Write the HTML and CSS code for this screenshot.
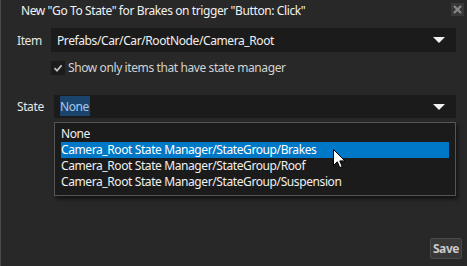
FILE: index.html
```html
<!DOCTYPE html>
<html lang="en">
<head>
    <meta charset="UTF-8">
    <meta name="viewport" content="width=device-width, initial-scale=1.0">
    <title>Go To State</title>
    <link rel="stylesheet" href="styles.css">
</head>
<body>
    <div class="dialog">
        <div class="titlebar">
            <span class="title">New "Go To State" for Brakes on trigger "Button: Click"</span>
            <span class="close">
                <svg width="9" height="9" viewBox="0 0 9 9"><path d="M1 1L8 8M8 1L1 8" stroke="#8a8a8a" stroke-width="2"/></svg>
            </span>
        </div>

        <div class="form-row item-row">
            <label class="label">Item</label>
            <div class="combo">
                <span class="combo-text">Prefabs/Car/Car/RootNode/Camera_Root</span>
                <span class="arrow"></span>
            </div>
        </div>

        <div class="check-row">
            <span class="checkbox">
                <svg width="10" height="10" viewBox="0 0 10 10"><path d="M1.5 5.2L4 7.6L8.6 2.4" fill="none" stroke="#bdbdbd" stroke-width="1.8"/></svg>
            </span>
            <span class="check-text">Show only items that have state manager</span>
        </div>

        <div class="form-row state-row">
            <label class="label">State</label>
            <div class="combo-wrap">
                <div class="combo">
                    <span class="combo-text"><span class="selected-text">None</span></span>
                    <span class="arrow"></span>
                </div>
                <ul class="popup">
                    <li>None</li>
                    <li class="hover">Camera_Root State Manager/StateGroup/Brakes</li>
                    <li>Camera_Root State Manager/StateGroup/Roof</li>
                    <li>Camera_Root State Manager/StateGroup/Suspension</li>
                </ul>
                <svg class="cursor" width="13" height="20" viewBox="0 0 13 20">
                    <path d="M0.5 0.5V16.5L4.3 12.8L6.8 18.6L9.2 17.6L6.8 11.9H11.9Z" fill="#fff" stroke="#000" stroke-width="1"/>
                </svg>
            </div>
        </div>

        <div class="footer">
            <button class="save">Save</button>
        </div>
    </div>
</body>
</html>
```

FILE: styles.css
```css
body {
    margin: 0;
    background: #282828;
    font-family: "Noto Sans", "Open Sans", sans-serif;
    font-size: 12px;
    letter-spacing: -0.4px;
    color: #ececec;
}
.dialog {
    width: 466px;
    height: 266px;
    border-left: 1px solid #4c4c4c;
    display: flex;
    flex-direction: column;
    position: relative;
}
.titlebar {
    height: 20px;
    display: flex;
    align-items: center;
    justify-content: space-between;
    padding-left: 20px;
    padding-right: 3px;
}
.title {
    color: #f2f2f2;
    padding-top: 1px;
}
.close {
    width: 13px;
    height: 13px;
    background: #393939;
    display: flex;
    align-items: center;
    justify-content: center;
    margin-top: -2px;
}
.form-row {
    display: flex;
    align-items: center;
}
.label {
    color: #e6e6e6;
    padding-left: 16px;
}
.item-row {
    margin-top: 8px;
}
.item-row .label {
    width: 34px;
}
.state-row {
    margin-top: 19px;
    align-items: flex-start;
}
.state-row .label {
    width: 37px;
    line-height: 23px;
}
.combo {
    background: #1b1b1b;
    height: 24px;
    display: flex;
    align-items: center;
    justify-content: space-between;
    padding: 0 11px 0 6px;
}
.item-row .combo {
    width: 388px;
}
.state-row .combo {
    height: 23px;
}
.combo-wrap {
    width: 402px;
    position: relative;
}
.combo-text {
    color: #f0f0f0;
}
.selected-text {
    background: #1a446c;
    color: #a9c9ea;
    padding: 2px 1px 1px 0;
}
.arrow {
    width: 0;
    height: 0;
    border-left: 6px solid transparent;
    border-right: 6px solid transparent;
    border-top: 6px solid #f2f2f2;
}
.check-row {
    display: flex;
    align-items: center;
    margin-top: 7px;
    padding-left: 50px;
}
.checkbox {
    width: 14px;
    height: 14px;
    background: #1b1b1b;
    display: flex;
    align-items: center;
    justify-content: center;
}
.check-text {
    color: #d2d2d2;
    margin-left: 3px;
}
.popup {
    position: absolute;
    top: 27px;
    left: 0;
    margin: 0;
    padding: 3px 6px 5px 6px;
    box-sizing: border-box;
    width: 402px;
    list-style: none;
    background: #1b1b1b;
    border: 1px solid #555;
    box-shadow: 2px 3px 4px rgba(0, 0, 0, 0.55);
}
.popup li {
    height: 16px;
    line-height: 16px;
    color: #f0f0f0;
    white-space: nowrap;
}
.popup li.hover {
    background: #0078c8;
    color: #fff;
}
.cursor {
    position: absolute;
    left: 279px;
    top: 54px;
}
.footer {
    margin-top: auto;
    display: flex;
    justify-content: flex-end;
    padding: 0 5px 7px 0;
}
.save {
    font-family: "Noto Sans", "Open Sans", sans-serif;
    font-size: 12px;
    font-weight: bold;
    letter-spacing: -0.4px;
    color: #c9c9c9;
    background: #383838;
    border: 1px solid #4a4a4a;
    border-radius: 2px;
    height: 21px;
    width: 32px;
    padding: 0;
}
```
